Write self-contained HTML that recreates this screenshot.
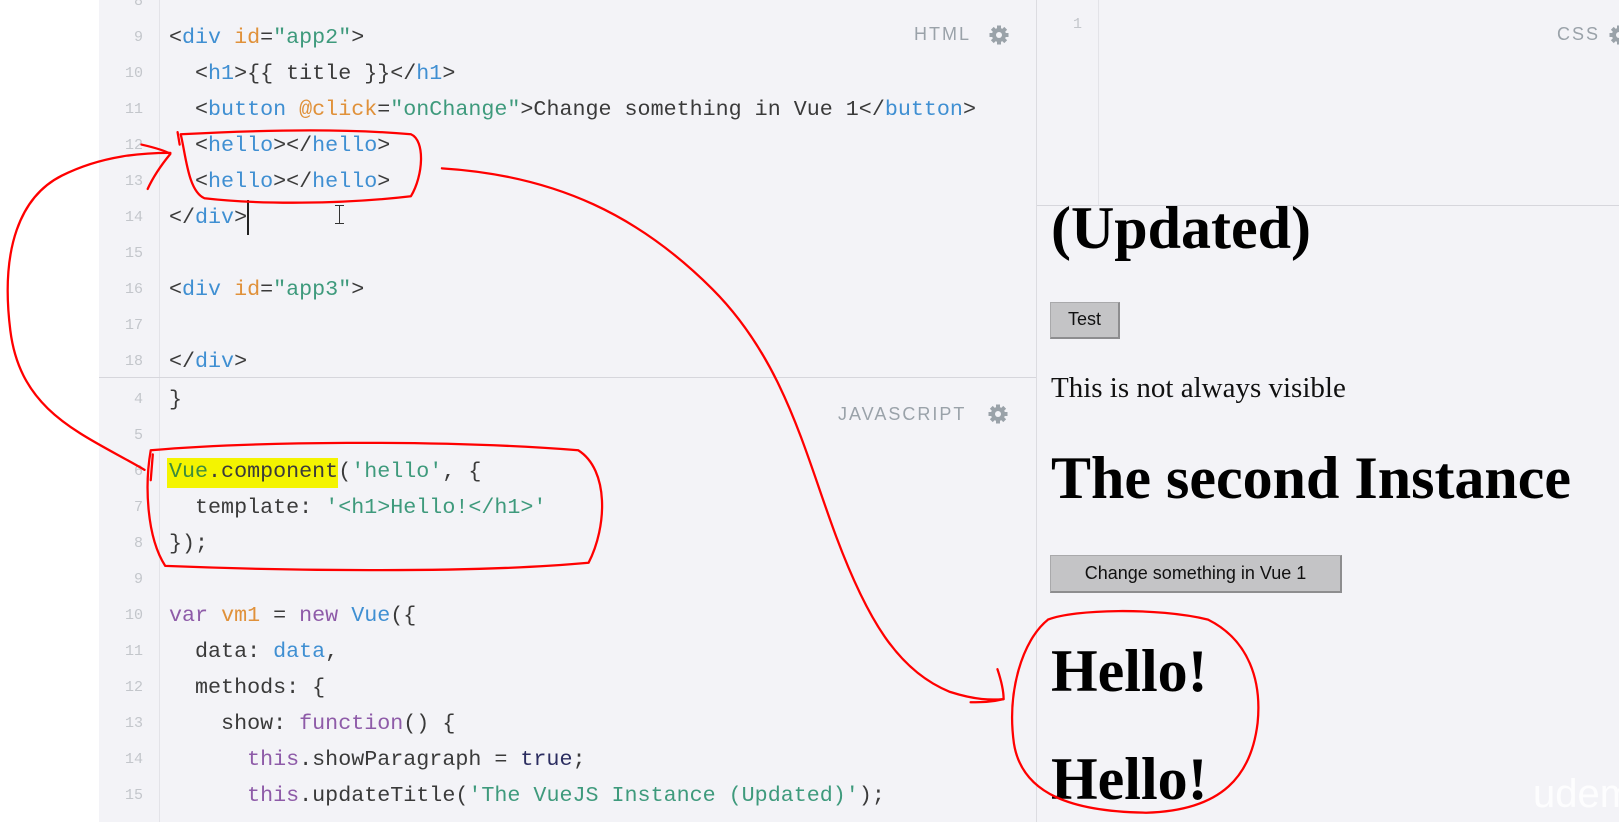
<!DOCTYPE html>
<html style="overflow:hidden"><head><meta charset="utf-8"><style>
*{margin:0;padding:0;box-sizing:border-box}
html,body{width:1619px;height:822px;overflow:hidden}
body{background:#fff;position:relative;font-family:"Liberation Sans",sans-serif}
.ed{position:absolute;background:#f3f3f7}
.gut{position:absolute;background:#f3f3f7;border-right:1px solid #e3e3e8}
.ln{position:absolute;width:48px;text-align:right;font:15px/26px "Liberation Mono",monospace;color:#c3c6cb}
.c{position:absolute;left:169px;font:21.7px/26px "Liberation Mono",monospace;color:#3a3a3a;white-space:pre}
.t{color:#3f8fd2}.a{color:#e0913a}.s{color:#3e9a7c}.k{color:#8e5ba8}.b{color:#2b2d60}
.lbl{position:absolute;font-size:18px;letter-spacing:2px;color:#9aa2a9}
.h{position:absolute;font-family:"Liberation Serif",serif;font-weight:bold;font-size:60px;color:#000;white-space:nowrap;line-height:1}
.btn{position:absolute;background:#c4c4c6;border:1px solid #a9a9ab;border-right:2px solid #8d8d8f;border-bottom:2px solid #8d8d8f;font:18px "Liberation Sans",sans-serif;color:#111;text-align:center}
</style></head><body>
<div class="ed" style="left:99px;top:0;width:937px;height:822px"></div>
<div class="gut" style="left:99px;top:0;width:61px;height:822px"></div>
<div style="position:absolute;left:99px;top:377px;width:937px;height:1px;background:#d6d6dc"></div>
<div class="ed" style="left:1036px;top:0;width:583px;height:822px;border-left:1px solid #dcdce1"></div>
<div style="position:absolute;left:1037px;top:0;width:62px;height:205px;border-right:1px solid #e3e3e8"></div>
<div style="position:absolute;left:1037px;top:205px;width:582px;height:1px;background:#d6d6dc"></div>

<div class="ln" style="left:95px;top:-11px">8</div>
<div class="ln" style="left:95px;top:25px">9</div>
<div class="ln" style="left:95px;top:61px">10</div>
<div class="ln" style="left:95px;top:97px">11</div>
<div class="ln" style="left:95px;top:133px">12</div>
<div class="ln" style="left:95px;top:169px">13</div>
<div class="ln" style="left:95px;top:205px">14</div>
<div class="ln" style="left:95px;top:241px">15</div>
<div class="ln" style="left:95px;top:277px">16</div>
<div class="ln" style="left:95px;top:313px">17</div>
<div class="ln" style="left:95px;top:349px">18</div>

<div class="c" style="top:25px">&lt;<span class="t">div</span> <span class="a">id</span>=<span class="s">"app2"</span>&gt;</div>
<div class="c" style="top:61px">  &lt;<span class="t">h1</span>&gt;{{ title }}&lt;/<span class="t">h1</span>&gt;</div>
<div class="c" style="top:97px">  &lt;<span class="t">button</span> <span class="a">@click</span>=<span class="s">"onChange"</span>&gt;Change something in Vue 1&lt;/<span class="t">button</span>&gt;</div>
<div class="c" style="top:133px">  &lt;<span class="t">hello</span>&gt;&lt;/<span class="t">hello</span>&gt;</div>
<div class="c" style="top:169px">  &lt;<span class="t">hello</span>&gt;&lt;/<span class="t">hello</span>&gt;</div>
<div class="c" style="top:205px">&lt;/<span class="t">div</span>&gt;</div>
<div class="c" style="top:277px">&lt;<span class="t">div</span> <span class="a">id</span>=<span class="s">"app3"</span>&gt;</div>
<div class="c" style="top:349px">&lt;/<span class="t">div</span>&gt;</div>
<div style="position:absolute;left:247px;top:200px;width:2px;height:35px;background:#222"></div>
<div style="position:absolute;left:339px;top:205px;width:1px;height:18px;background:#333"></div>
<div style="position:absolute;left:335px;top:205px;width:9px;height:1px;background:#333"></div>
<div style="position:absolute;left:335px;top:223px;width:9px;height:1px;background:#333"></div>

<div class="lbl" style="left:914px;top:24px">HTML</div>
<svg style="position:absolute;left:989px;top:25px" width="20" height="20" viewBox="0 0 20 20"><g fill="#9aa2a9"><circle cx="10" cy="10" r="7"/><g stroke="#9aa2a9" stroke-width="4"><line x1="10" y1="0.5" x2="10" y2="19.5"/><line x1="0.5" y1="10" x2="19.5" y2="10"/><line x1="3.3" y1="3.3" x2="16.7" y2="16.7"/><line x1="16.7" y1="3.3" x2="3.3" y2="16.7"/></g></g><circle cx="10" cy="10" r="3" fill="#f3f3f7"/></svg>

<div class="ln" style="left:1034px;top:12px">1</div>
<div class="lbl" style="left:1557px;top:24px">CSS</div>
<svg style="position:absolute;left:1609px;top:25px" width="20" height="20" viewBox="0 0 20 20"><g fill="#9aa2a9"><circle cx="10" cy="10" r="7"/><g stroke="#9aa2a9" stroke-width="4"><line x1="10" y1="0.5" x2="10" y2="19.5"/><line x1="0.5" y1="10" x2="19.5" y2="10"/><line x1="3.3" y1="3.3" x2="16.7" y2="16.7"/><line x1="16.7" y1="3.3" x2="3.3" y2="16.7"/></g></g><circle cx="10" cy="10" r="3" fill="#f3f3f7"/></svg>

<div class="lbl" style="left:838px;top:404px">JAVASCRIPT</div>
<svg style="position:absolute;left:988px;top:404px" width="20" height="20" viewBox="0 0 20 20"><g fill="#9aa2a9"><circle cx="10" cy="10" r="7"/><g stroke="#9aa2a9" stroke-width="4"><line x1="10" y1="0.5" x2="10" y2="19.5"/><line x1="0.5" y1="10" x2="19.5" y2="10"/><line x1="3.3" y1="3.3" x2="16.7" y2="16.7"/><line x1="16.7" y1="3.3" x2="3.3" y2="16.7"/></g></g><circle cx="10" cy="10" r="3" fill="#f3f3f7"/></svg>

<div class="ln" style="left:95px;top:387px">4</div>
<div class="ln" style="left:95px;top:423px">5</div>
<div class="ln" style="left:95px;top:459px">6</div>
<div class="ln" style="left:95px;top:495px">7</div>
<div class="ln" style="left:95px;top:531px">8</div>
<div class="ln" style="left:95px;top:567px">9</div>
<div class="ln" style="left:95px;top:603px">10</div>
<div class="ln" style="left:95px;top:639px">11</div>
<div class="ln" style="left:95px;top:675px">12</div>
<div class="ln" style="left:95px;top:711px">13</div>
<div class="ln" style="left:95px;top:747px">14</div>
<div class="ln" style="left:95px;top:783px">15</div>

<div style="position:absolute;left:167px;top:458px;width:171px;height:30px;background:#f4f400"></div>
<div class="c" style="top:387px">}</div>
<div class="c" style="top:459px"><span style="color:#3c8c3c">Vue</span>.component(<span class="s">'hello'</span>, {</div>
<div class="c" style="top:495px">  template: <span class="s">'&lt;h1&gt;Hello!&lt;/h1&gt;'</span></div>
<div class="c" style="top:531px">});</div>
<div class="c" style="top:603px"><span class="k">var</span> <span class="a">vm1</span> = <span class="k">new</span> <span class="t">Vue</span>({</div>
<div class="c" style="top:639px">  data: <span class="t">data</span>,</div>
<div class="c" style="top:675px">  methods: {</div>
<div class="c" style="top:711px">    show: <span class="k">function</span>() {</div>
<div class="c" style="top:747px">      <span class="k">this</span>.showParagraph = <span class="b">true</span>;</div>
<div class="c" style="top:783px">      <span class="k">this</span>.updateTitle(<span class="s">'The VueJS Instance (Updated)'</span>);</div>

<div class="h" style="left:1051px;top:198px">(Updated)</div>
<div class="btn" style="left:1050px;top:302px;width:70px;height:37px;line-height:33px">Test</div>
<div style="position:absolute;left:1051px;top:372px;font:29px 'Liberation Serif',serif;color:#111;white-space:nowrap">This is not always visible</div>
<div class="h" style="left:1051px;top:448px">The second Instance</div>
<div class="btn" style="left:1050px;top:555px;width:292px;height:38px;line-height:34px">Change something in Vue 1</div>
<div class="h" style="left:1051px;top:641px">Hello!</div>
<div class="h" style="left:1051px;top:749px">Hello!</div>
<div style="position:absolute;left:1533px;top:772px;font:40px 'Liberation Sans',sans-serif;color:#fff;opacity:.9;white-space:nowrap">udemy</div>

<svg style="position:absolute;left:0;top:0" width="1619" height="822" viewBox="0 0 1568 796" preserveAspectRatio="none">
<g fill="none" stroke="#f00" stroke-width="2.2" stroke-linecap="round" stroke-linejoin="round">
<path d="M175 130 C250 126 330 124 398 130 C412 136 410 170 398 190 C330 198 250 198 198 192 C182 185 180 150 175 130"/>
<path d="M172 128 L174 140"/>
<path d="M140 455 C80 420 20 400 10 320 C0 240 20 190 60 170 C100 150 140 148 165 148"/>
<path d="M137 140 C150 143 160 146 165 149 C156 160 148 172 143 183"/>
<path d="M146 436 C240 428 420 425 560 436 C590 455 588 510 570 545 C450 556 260 552 160 548 C142 520 140 470 146 436"/>
<path d="M148 440 L146 465"/>
<path d="M428 163 C540 170 620 210 690 280 C760 350 780 440 810 520 C840 600 870 650 920 670 C945 678 960 678 972 677"/>
<path d="M966 648 C970 660 972 670 972 677 C960 680 950 680 940 680"/>
<path d="M1015 600 C1040 590 1120 588 1170 600 C1210 620 1222 660 1218 700 C1212 750 1185 785 1110 787 C1040 786 990 770 982 720 C975 670 990 620 1015 600"/>
</g></svg>
</body></html>
